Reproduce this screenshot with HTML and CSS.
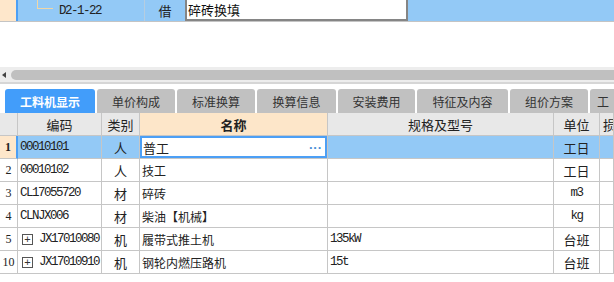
FILE: index.html
```html
<!DOCTYPE html>
<html lang="zh-CN">
<head>
    <meta charset="UTF-8">
    <title>工料机显示</title>
    <link rel="stylesheet" href="styles.css">
</head>
<body>
    <div class="tree-row">
        <div class="tree-gutter"></div>
        <div class="tree-code"><span class="branch"></span><span class="mono">D2-1-22</span></div>
        <div class="tree-type">借</div>
        <div class="tree-name">碎砖换填</div>
        <div class="tree-rest"></div>
    </div>

    <div class="blank"></div>

    <div class="hscroll">
        <span class="arrow"></span>
        <div class="thumb"></div>
    </div>
    <div class="hscroll-edge"></div>

    <div class="tabs">
        <div class="tab active">工料机显示</div>
        <div class="tab">单价构成</div>
        <div class="tab">标准换算</div>
        <div class="tab">换算信息</div>
        <div class="tab">安装费用</div>
        <div class="tab">特征及内容</div>
        <div class="tab">组价方案</div>
        <div class="tab last">工</div>
    </div>

    <div class="grid">
        <div class="hd"></div>
        <div class="hd">编码</div>
        <div class="hd">类别</div>
        <div class="hd name-hd">名称</div>
        <div class="hd">规格及型号</div>
        <div class="hd">单位</div>
        <div class="hd left">损</div>

        <div class="num sel-num">1</div>
        <div class="cell sel mono">00010101</div>
        <div class="cell sel center">人</div>
        <div class="cell editing">普工<span class="dots">···</span></div>
        <div class="cell sel"></div>
        <div class="cell sel center">工日</div>
        <div class="cell sel"></div>

        <div class="num">2</div>
        <div class="cell mono">00010102</div>
        <div class="cell center">人</div>
        <div class="cell">技工</div>
        <div class="cell"></div>
        <div class="cell center">工日</div>
        <div class="cell"></div>

        <div class="num">3</div>
        <div class="cell mono">CL17055720</div>
        <div class="cell center">材</div>
        <div class="cell">碎砖</div>
        <div class="cell"></div>
        <div class="cell center mono">m3</div>
        <div class="cell"></div>

        <div class="num">4</div>
        <div class="cell mono">CLNJX006</div>
        <div class="cell center">材</div>
        <div class="cell">柴油【机械】</div>
        <div class="cell"></div>
        <div class="cell center mono">kg</div>
        <div class="cell"></div>

        <div class="num">5</div>
        <div class="cell mono"><span class="expand">+</span>JX17010080</div>
        <div class="cell center">机</div>
        <div class="cell">履带式推土机</div>
        <div class="cell mono">135kW</div>
        <div class="cell center">台班</div>
        <div class="cell"></div>

        <div class="num">10</div>
        <div class="cell mono"><span class="expand">+</span>JX17010910</div>
        <div class="cell center">机</div>
        <div class="cell">钢轮内燃压路机</div>
        <div class="cell mono">15t</div>
        <div class="cell center">台班</div>
        <div class="cell"></div>
    </div>
</body>
</html>
```

FILE: styles.css
```css
body {
    margin: 0;
    background: #ffffff;
    font-family: "Noto Sans CJK SC", "Liberation Sans", sans-serif;
    font-size: 12px;
    color: #222;
    overflow: hidden;
}
.mono {
    font-family: "Liberation Mono", "Noto Sans CJK SC", monospace;
    font-size: 12.5px;
    letter-spacing: -1.5px;
}

/* tree row at the top */
.tree-row {
    display: flex;
    height: 21px;
    border-bottom: 1px solid #c4c4c4;
    background: #93c9f6;
}
.tree-gutter {
    width: 16px;
    background: #fee7cb;
    border-right: 2px solid #4c9ff5;
}
.tree-code {
    width: 126px;
    display: flex;
    align-items: center;
    border-right: 1px solid #b6cde0;
}
.branch {
    align-self: flex-start;
    width: 16px;
    height: 9px;
    margin-left: 19px;
    margin-right: 6px;
    border-left: 1px solid #f0d6a6;
    border-bottom: 1px solid #f0d6a6;
    box-sizing: border-box;
}
.tree-type {
    width: 40px;
    display: flex;
    align-items: center;
    justify-content: center;
    font-size: 13px;
}
.tree-name {
    width: 218px;
    background: #fff;
    border: 2px solid #858585;
    border-top: none;
    padding-left: 1px;
    display: flex;
    align-items: center;
    font-size: 13px;
    color: #111;
}
.tree-rest {
    flex: 1;
}

.blank {
    height: 45px;
}

/* horizontal scrollbar */
.hscroll {
    height: 15px;
    background: #ededed;
    display: flex;
    align-items: center;
}
.arrow {
    width: 0;
    height: 0;
    margin-left: 2px;
    margin-right: 5px;
    border-top: 3px solid transparent;
    border-bottom: 3px solid transparent;
    border-right: 4px solid #444;
}
.thumb {
    flex: 1;
    height: 10px;
    background: #c0c0c0;
    border-radius: 5px 0 0 5px;
}
.hscroll-edge {
    height: 2px;
    background: #d6d6d6;
    margin-bottom: 5px;
}

/* tabs */
.tabs {
    display: flex;
    gap: 2px;
    padding-left: 5px;
    height: 24px;
    overflow: hidden;
}
.tab {
    flex: none;
    background: #c1c1c1;
    border-radius: 3px 3px 0 0;
    color: #333;
    font-size: 12px;
    display: flex;
    align-items: center;
    justify-content: center;
    width: 78px;
}
.tab:nth-child(4) { width: 79px; }
.tab:nth-child(5) { width: 77px; }
.tab:nth-child(6) { width: 91px; }
.tab.active {
    width: 90px;
    background: #429dfa;
    color: #fff;
    font-weight: bold;
}
.tab.last {
    width: 40px;
    justify-content: flex-start;
    padding-left: 7px;
    box-sizing: border-box;
}

/* grid */
.grid {
    display: grid;
    grid-template-columns: 18px 84px 38px 188px 226px 46px 1fr;
    grid-auto-rows: 23px;
}
.grid > div {
    box-sizing: border-box;
    border-right: 1px solid #c6c6c6;
    border-bottom: 1px solid #c6c6c6;
    display: flex;
    align-items: center;
    white-space: nowrap;
    overflow: hidden;
}
.hd {
    background: #e8e8e8;
    justify-content: center;
    font-size: 13px;
    color: #222;
}
.hd.name-hd {
    background: #fde6c9;
    font-weight: bold;
}
.hd.left {
    justify-content: flex-start;
    padding-left: 3px;
}
.num {
    justify-content: center;
    font-family: "Liberation Serif", serif;
    font-size: 12px;
}
.num.sel-num {
    background: #fee7cb;
    border-right: 2px solid #4c9ff5 !important;
    font-weight: bold;
}
.cell {
    padding-left: 2px;
}
.cell.center {
    justify-content: center;
    padding-left: 0;
    font-size: 13px;
}
.cell.center.mono {
    font-size: 12.5px;
}
.sel {
    background: #93c9f6;
}
.cell.editing {
    background: #fff;
    box-shadow: inset 0 0 0 2px #4c9ff5;
    padding-left: 3px;
    font-size: 13px;
    justify-content: space-between;
    padding-right: 5px;
}
.dots {
    color: #4a8fd6;
    font-weight: bold;
    letter-spacing: 0;
    font-family: "Liberation Sans", sans-serif;
}
.expand {
    display: inline-flex;
    align-items: center;
    justify-content: center;
    flex: none;
    width: 11px;
    height: 11px;
    box-sizing: border-box;
    border: 1px solid #555;
    margin-left: 2px;
    margin-right: 6px;
    font-family: "Liberation Sans", sans-serif;
    font-size: 11px;
    line-height: 1;
    letter-spacing: 0;
    color: #333;
}
```
